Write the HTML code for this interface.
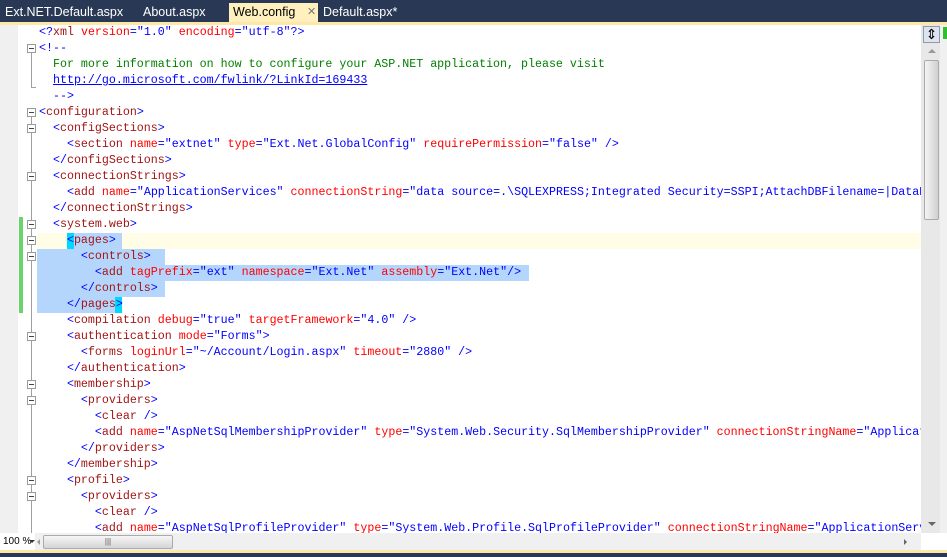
<!DOCTYPE html>
<html><head><meta charset="utf-8"><style>
*{margin:0;padding:0;box-sizing:border-box}
body{width:947px;height:557px;overflow:hidden;background:#fff;position:relative;font-family:"Liberation Sans",sans-serif}
#tabs{position:absolute;left:0;top:0;width:947px;height:22px;background:#293955}
#tabs div{position:absolute;top:3px;height:19px;font-size:12.5px;color:#fff;line-height:19px;white-space:nowrap}
#yl{position:absolute;left:0;top:22px;width:947px;height:3px;background:#fde8a8}
#gut{position:absolute;left:0;top:25px;width:18px;height:508px;background:#f0f0f0}
.ln{position:absolute;left:39px;height:16px;line-height:16px;font-family:"Liberation Mono",monospace;font-size:11.65px;white-space:pre;color:#00f}
.t{color:#a31515}.a{color:#f00}.v{color:#00f}.c{color:#008000}.b{color:#00f}
.fb{position:absolute;left:27px;width:9px;height:9px;border:1px solid #999;background:#fff}
.fb:after{content:"";position:absolute;left:1px;top:3px;width:5px;height:1px;background:#444}
.vl{position:absolute;left:31px;width:1px;background:#a0a0a0}
.hk{position:absolute;left:31px;width:5px;height:1px;background:#a0a0a0}
.sel{position:absolute;height:16px;background:#b4d6fc}
.cy{position:absolute;height:16px;width:7px;background:#00d8ff}
</style></head><body>
<div id="tabs">
<div style="left:0;width:122px;padding-left:5px">Ext.NET.Default.aspx</div>
<div style="left:138px;padding-left:5px">About.aspx</div>
<div style="left:229px;width:89px;background:#fff0bd;color:#000;padding-left:4px">Web.config <span style="color:#777;font-size:11px;position:absolute;left:78px">✕</span></div>
<div style="left:318px;padding-left:5px">Default.aspx*</div>
</div>
<div id="yl"></div>
<div id="gut"></div>
<div style="position:absolute;left:19px;top:217px;width:4px;height:96px;background:#6ad46a"></div>
<div style="position:absolute;left:37px;top:233px;width:884px;height:16px;background:#fffde6"></div>
<div class="sel" style="left:74px;top:233px;width:48px"></div><div class="cy" style="left:67px;top:233px"></div>
<div class="sel" style="left:37px;top:249px;width:128px"></div>
<div class="sel" style="left:37px;top:265px;width:492px"></div>
<div class="sel" style="left:37px;top:281px;width:128px"></div>
<div class="sel" style="left:37px;top:297px;width:78px"></div><div class="cy" style="left:115px;top:297px"></div>
<div class="vl" style="top:47px;height:40px"></div><div class="hk" style="top:87px"></div>
<div class="vl" style="top:111px;height:422px"></div>
<div class="fb" style="top:44px"></div>
<div class="fb" style="top:108px"></div>
<div class="fb" style="top:124px"></div>
<div class="fb" style="top:172px"></div>
<div class="fb" style="top:220px"></div>
<div class="fb" style="top:236px"></div>
<div class="fb" style="top:252px"></div>
<div class="fb" style="top:332px"></div>
<div class="fb" style="top:380px"></div>
<div class="fb" style="top:396px"></div>
<div class="fb" style="top:476px"></div>
<div class="fb" style="top:492px"></div>
<div style="position:absolute;left:0;top:25px;width:921px;height:508px;overflow:hidden">
<div style="position:absolute;left:0;top:-25px">
<div class="ln" style="top:25px">&lt;?<span class="t">xml</span> <span class="a">version</span>="1.0" <span class="a">encoding</span>="utf-8"?&gt;</div>
<div class="ln" style="top:41px">&lt;!--</div>
<div class="ln c" style="top:57px">  For more information on how to configure your ASP.NET application, please visit</div>
<div class="ln" style="top:73px">  <u>http://go.microsoft.com/fwlink/?LinkId=169433</u></div>
<div class="ln" style="top:89px">  --&gt;</div>
<div class="ln" style="top:105px">&lt;<span class="t">configuration</span>&gt;</div>
<div class="ln" style="top:121px">  &lt;<span class="t">configSections</span>&gt;</div>
<div class="ln" style="top:137px">    &lt;<span class="t">section</span> <span class="a">name</span>="extnet" <span class="a">type</span>="Ext.Net.GlobalConfig" <span class="a">requirePermission</span>="false" /&gt;</div>
<div class="ln" style="top:153px">  &lt;/<span class="t">configSections</span>&gt;</div>
<div class="ln" style="top:169px">  &lt;<span class="t">connectionStrings</span>&gt;</div>
<div class="ln" style="top:185px">    &lt;<span class="t">add</span> <span class="a">name</span>="ApplicationServices" <span class="a">connectionString</span>="data source=.\SQLEXPRESS;Integrated Security=SSPI;AttachDBFilename=|DataDirectory|"</div>
<div class="ln" style="top:201px">  &lt;/<span class="t">connectionStrings</span>&gt;</div>
<div class="ln" style="top:217px">  &lt;<span class="t">system.web</span>&gt;</div>
<div class="ln" style="top:233px">    &lt;<span class="t">pages</span>&gt;</div>
<div class="ln" style="top:249px">      &lt;<span class="t">controls</span>&gt;</div>
<div class="ln" style="top:265px">        &lt;<span class="t">add</span> <span class="a">tagPrefix</span>="ext" <span class="a">namespace</span>="Ext.Net" <span class="a">assembly</span>="Ext.Net"/&gt;</div>
<div class="ln" style="top:281px">      &lt;/<span class="t">controls</span>&gt;</div>
<div class="ln" style="top:297px">    &lt;/<span class="t">pages</span>&gt;</div>
<div class="ln" style="top:313px">    &lt;<span class="t">compilation</span> <span class="a">debug</span>="true" <span class="a">targetFramework</span>="4.0" /&gt;</div>
<div class="ln" style="top:329px">    &lt;<span class="t">authentication</span> <span class="a">mode</span>="Forms"&gt;</div>
<div class="ln" style="top:345px">      &lt;<span class="t">forms</span> <span class="a">loginUrl</span>="~/Account/Login.aspx" <span class="a">timeout</span>="2880" /&gt;</div>
<div class="ln" style="top:361px">    &lt;/<span class="t">authentication</span>&gt;</div>
<div class="ln" style="top:377px">    &lt;<span class="t">membership</span>&gt;</div>
<div class="ln" style="top:393px">      &lt;<span class="t">providers</span>&gt;</div>
<div class="ln" style="top:409px">        &lt;<span class="t">clear</span> /&gt;</div>
<div class="ln" style="top:425px">        &lt;<span class="t">add</span> <span class="a">name</span>="AspNetSqlMembershipProvider" <span class="a">type</span>="System.Web.Security.SqlMembershipProvider" <span class="a">connectionStringName</span>="ApplicationServices"</div>
<div class="ln" style="top:441px">      &lt;/<span class="t">providers</span>&gt;</div>
<div class="ln" style="top:457px">    &lt;/<span class="t">membership</span>&gt;</div>
<div class="ln" style="top:473px">    &lt;<span class="t">profile</span>&gt;</div>
<div class="ln" style="top:489px">      &lt;<span class="t">providers</span>&gt;</div>
<div class="ln" style="top:505px">        &lt;<span class="t">clear</span> /&gt;</div>
<div class="ln" style="top:521px">        &lt;<span class="t">add</span> <span class="a">name</span>="AspNetSqlProfileProvider" <span class="a">type</span>="System.Web.Profile.SqlProfileProvider" <span class="a">connectionStringName</span>="ApplicationServices"</div>
</div></div>
<div style="position:absolute;left:921px;top:25px;width:19px;height:508px;background:#e8e8e8"></div>
<div style="position:absolute;left:923px;top:26px;width:17px;height:17px;border:1px solid #8a9cb0;background:#dde4ee;font-size:14px;line-height:14px;text-align:center;color:#000">⇕</div>
<div style="position:absolute;left:928px;top:49px;width:0;height:0;border-left:4px solid transparent;border-right:4px solid transparent;border-bottom:4px solid #999"></div>
<div style="position:absolute;left:924px;top:60px;width:15px;height:160px;border:1px solid #aaa;border-radius:2px;background:linear-gradient(90deg,#f4f4f4,#d0d0d0)"></div>
<div style="position:absolute;left:928px;top:522px;width:0;height:0;border-left:4px solid transparent;border-right:4px solid transparent;border-top:4px solid #666"></div>
<div style="position:absolute;left:940px;top:25px;width:7px;height:508px;background:#f0f0f0"></div>
<div style="position:absolute;left:943px;top:27px;width:4px;height:12px;background:#2ec02e"></div>
<div style="position:absolute;left:0;top:533px;width:947px;height:17px;background:#f0f0f0"></div>
<div style="position:absolute;left:0;top:533px;width:35px;height:17px;background:#fff;font-size:10px;line-height:17px;padding-left:3px;color:#000;white-space:nowrap">100 %</div>
<div style="position:absolute;left:29px;top:540px;width:0;height:0;border-left:3px solid transparent;border-right:3px solid transparent;border-top:3px solid #333"></div>
<div style="position:absolute;left:37px;top:539px;width:0;height:0;border-top:3px solid transparent;border-bottom:3px solid transparent;border-right:3px solid #999"></div>
<div style="position:absolute;left:43px;top:535px;width:130px;height:14px;border:1px solid #aaa;border-radius:2px;background:linear-gradient(#f6f6f6,#d4d4d4);font-size:8px;line-height:12px;text-align:center;color:#555">|||</div>
<div style="position:absolute;left:904px;top:539px;width:0;height:0;border-top:3px solid transparent;border-bottom:3px solid transparent;border-left:3px solid #666"></div>
<div style="position:absolute;left:921px;top:533px;width:26px;height:17px;background:#fff"></div>
<div style="position:absolute;left:0;top:550px;width:947px;height:3px;background:#fde8a8"></div>
<div style="position:absolute;left:0;top:553px;width:947px;height:4px;background:#293955"></div>
</body></html>
